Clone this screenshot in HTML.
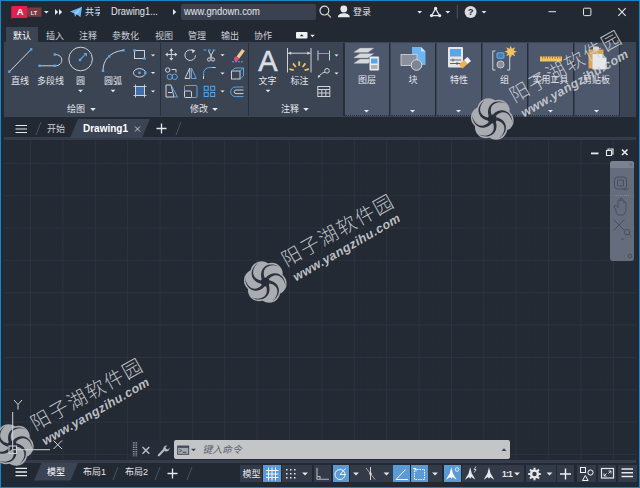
<!DOCTYPE html>
<html><head><meta charset="utf-8"><title>AutoCAD LT</title>
<style>
*{box-sizing:border-box;margin:0;padding:0}
html,body{width:640px;height:488px;overflow:hidden;background:#222933}
body{font-family:"Liberation Sans","Noto Sans CJK SC",sans-serif;color:#e6e8ec;font-size:10px;position:relative}
.a{position:absolute}
.t{position:absolute;font-size:9px;line-height:12px;color:#e4e6ea;white-space:nowrap}
.c{transform:translateX(-50%)}
#frame{position:absolute;left:0;top:0;width:640px;height:488px;border:1px solid #1787c5}
#ribbon{position:absolute;left:4px;top:42px;width:632px;height:75px;background:#3b4453}
.hp{position:absolute;top:43px;width:44px;height:72.500px;background:#4d586d;border-bottom:1px dotted #2b313d}
#draw{position:absolute;left:4px;top:137px;width:632px;height:324px;background:#232a34}
#status{position:absolute;left:1px;top:461px;width:638px;height:26px;background:#222933}
svg{position:absolute;left:0;top:0;overflow:visible}
.wm{position:absolute;white-space:nowrap;transform-origin:0 50%;transform:rotate(-29.3deg);color:rgba(208,210,214,.9)}
.wm1{font-size:19.5px;line-height:22px;letter-spacing:1.5px;font-weight:300}
.wm2{font-size:12.5px;line-height:16px;font-weight:bold;font-style:italic;letter-spacing:.4px;transform:rotate(-30deg)}
</style></head><body>
<div id="frame"></div>
<div id="ribbon"></div>
<div class="a" style="left:6px;top:27px;width:32px;height:15px;background:#3b4453"></div>
<div class="hp" style="left:344.5px"></div>
<div class="hp" style="left:390.5px"></div>
<div class="hp" style="left:436.5px"></div>
<div class="hp" style="left:482.5px"></div>
<div class="hp" style="left:528.5px"></div>
<div class="hp" style="left:574.5px"></div>
<div class="a" style="left:342.8px;top:43px;width:1.700px;height:73px;background:#262c37"></div>
<div class="a" style="left:388.8px;top:43px;width:1.700px;height:73px;background:#262c37"></div>
<div class="a" style="left:434.8px;top:43px;width:1.700px;height:73px;background:#262c37"></div>
<div class="a" style="left:480.8px;top:43px;width:1.700px;height:73px;background:#262c37"></div>
<div class="a" style="left:526.8px;top:43px;width:1.700px;height:73px;background:#262c37"></div>
<div class="a" style="left:572.8px;top:43px;width:1.700px;height:73px;background:#262c37"></div>
<div class="a" style="left:618.8px;top:43px;width:1.700px;height:73px;background:#262c37"></div>
<div class="a" style="left:159.5px;top:43px;width:1px;height:73px;background:#2a303b"></div>
<div class="a" style="left:247.5px;top:43px;width:1px;height:73px;background:#2a303b"></div>
<div class="a" style="left:343.5px;top:43px;width:1px;height:73px;background:#2a303b"></div>
<div class="a" style="left:181px;top:4px;width:135px;height:16px;background:#3a4252;border-radius:2px"></div>
<div id="draw"></div>
<svg width="640" height="488" viewBox="0 0 640 488"><path d="M4.60 139V459 M11.07 139V459 M17.55 139V459 M24.02 139V459 M36.98 139V459 M43.45 139V459 M49.93 139V459 M56.40 139V459 M69.36 139V459 M75.83 139V459 M82.31 139V459 M88.78 139V459 M101.74 139V459 M108.21 139V459 M114.69 139V459 M121.16 139V459 M134.12 139V459 M140.59 139V459 M147.07 139V459 M153.54 139V459 M166.50 139V459 M172.97 139V459 M179.45 139V459 M185.92 139V459 M198.88 139V459 M205.35 139V459 M211.83 139V459 M218.30 139V459 M231.26 139V459 M237.73 139V459 M244.21 139V459 M250.68 139V459 M263.64 139V459 M270.11 139V459 M276.59 139V459 M283.06 139V459 M296.02 139V459 M302.49 139V459 M308.97 139V459 M315.44 139V459 M328.40 139V459 M334.87 139V459 M341.35 139V459 M347.82 139V459 M360.78 139V459 M367.25 139V459 M373.73 139V459 M380.20 139V459 M393.16 139V459 M399.63 139V459 M406.11 139V459 M412.58 139V459 M425.54 139V459 M432.01 139V459 M438.49 139V459 M444.96 139V459 M457.92 139V459 M464.39 139V459 M470.87 139V459 M477.34 139V459 M490.30 139V459 M496.77 139V459 M503.25 139V459 M509.72 139V459 M522.68 139V459 M529.15 139V459 M535.63 139V459 M542.10 139V459 M555.06 139V459 M561.53 139V459 M568.01 139V459 M574.48 139V459 M587.44 139V459 M593.91 139V459 M600.39 139V459 M606.86 139V459 M619.82 139V459 M626.29 139V459 M632.77 139V459 M4 143.88H636 M4 150.36H636 M4 156.83H636 M4 169.77H636 M4 176.24H636 M4 182.72H636 M4 189.19H636 M4 202.13H636 M4 208.60H636 M4 215.08H636 M4 221.55H636 M4 234.49H636 M4 240.96H636 M4 247.44H636 M4 253.91H636 M4 266.85H636 M4 273.32H636 M4 279.80H636 M4 286.27H636 M4 299.21H636 M4 305.68H636 M4 312.16H636 M4 318.63H636 M4 331.57H636 M4 338.04H636 M4 344.52H636 M4 350.99H636 M4 363.93H636 M4 370.40H636 M4 376.88H636 M4 383.35H636 M4 396.29H636 M4 402.76H636 M4 409.24H636 M4 415.71H636 M4 428.65H636 M4 435.12H636 M4 441.60H636 M4 448.07H636" stroke="#262d38" stroke-width="1" fill="none" stroke-dasharray="1 2"/><path d="M30.50 139V459 M62.88 139V459 M95.26 139V459 M127.64 139V459 M160.02 139V459 M192.40 139V459 M224.78 139V459 M257.16 139V459 M289.54 139V459 M321.92 139V459 M354.30 139V459 M386.68 139V459 M419.06 139V459 M451.44 139V459 M483.82 139V459 M516.20 139V459 M548.58 139V459 M580.96 139V459 M613.34 139V459 M4 163.30H636 M4 195.66H636 M4 228.02H636 M4 260.38H636 M4 292.74H636 M4 325.10H636 M4 357.46H636 M4 389.82H636 M4 422.18H636 M4 454.54H636" stroke="#2d3440" stroke-width="1" fill="none"/></svg>
<div class="a" style="left:4px;top:137.300px;width:632px;height:3.200px;background:#343c4b"></div>
<div id="status"></div>
<div class="a" style="left:4px;top:459.500px;width:632px;height:3.500px;background:#353d4c"></div>
<div class="a" style="left:240px;top:465px;width:22px;height:17px;background:#333b49"></div>
<div class="a" style="left:263px;top:465px;width:17.5px;height:17px;background:#5b9bd5"></div>
<div class="a" style="left:282px;top:465px;width:30px;height:17px;background:#333b49"></div>
<div class="a" style="left:314px;top:465px;width:17px;height:17px;background:#333b49"></div>
<div class="a" style="left:332.5px;top:465px;width:16.5px;height:17px;background:#5b9bd5"></div>
<div class="a" style="left:350px;top:465px;width:12px;height:17px;background:#333b49"></div>
<div class="a" style="left:362px;top:465px;width:31px;height:17px;background:#333b49"></div>
<div class="a" style="left:393px;top:465px;width:17px;height:17px;background:#5b9bd5"></div>
<div class="a" style="left:411px;top:465px;width:17px;height:17px;background:#5b9bd5"></div>
<div class="a" style="left:428px;top:465px;width:14px;height:17px;background:#333b49"></div>
<div class="a" style="left:444px;top:465px;width:17px;height:17px;background:#5b9bd5"></div>
<div class="a" style="left:462px;top:465px;width:36px;height:17px;background:#333b49"></div>
<div class="a" style="left:498px;top:465px;width:26px;height:17px;background:#333b49"></div>
<div class="a" style="left:526px;top:465px;width:30px;height:17px;background:#333b49"></div>
<div class="a" style="left:557px;top:465px;width:17px;height:17px;background:#333b49"></div>
<div class="a" style="left:577px;top:465px;width:19px;height:17px;background:#333b49"></div>
<div class="a" style="left:598px;top:465px;width:18px;height:17px;background:#333b49"></div>
<div class="a" style="left:618px;top:465px;width:19px;height:17px;background:#333b49"></div>
<div class="a" style="left:174px;top:440px;width:336px;height:19px;background:#c4c5c7;border-radius:2px"></div>
<div class="a" style="left:130px;top:440px;width:44px;height:19px;background:#262d38"></div>
<div class="a" style="left:610px;top:161px;width:24px;height:100px;background:#6b7382;border-radius:3px;opacity:.92"></div>
<svg width="640" height="488" viewBox="0 0 640 488"><path d="M11.300 7L12.500 6H27V18H12.500L11.300 19z" fill="#e61e50"/><rect x="27" y="7.500" width="14.500" height="9.300" fill="#7a3a44"/><text x="20.200" y="15.200" text-anchor="middle" font-family="Liberation Sans,sans-serif" font-size="9.500" font-weight="bold" fill="#fff">A</text><text x="30.800" y="14.700" font-family="Liberation Sans,sans-serif" font-size="5.500" font-weight="bold" fill="#efe3e3">LT</text><path d="M43.9 11.0h4.8l-2.4 2.4z" fill="#e6e8ec"/><path d="M55 9l3.2 3-3.2 3zM59 9l3.2 3-3.2 3z" fill="#e6e8ec"/><path d="M70 11.5L82 6.8 80.5 17.2 76.8 14.3 75 17 74.3 13.4z" fill="#6db6f2"/><path d="M74.3 13.4L82 6.8 76.8 14.3" fill="#9fd0f8"/><path d="M173 9l3.2 3-3.2 3z" fill="#e6e8ec"/><circle cx="324.4" cy="10.6" r="4.4" fill="none" stroke="#d8dbe0" stroke-width="1.2"/><path d="M327.6 14l3.2 3.4" stroke="#e0b080" stroke-width="1.4"/><circle cx="343.8" cy="9" r="3.4" fill="#e6e8ec"/><path d="M337.8 17.2c.3-3 2.5-4 6-4s5.7 1 6 4z" fill="#e6e8ec"/><path d="M417.3 11.0h4.8l-2.4 2.4z" fill="#e6e8ec"/><path d="M435.6 8.6L431.6 15.6H439.6z" fill="none" stroke="#e6e8ec" stroke-width="1.2"/><circle cx="435.6" cy="8.4" r="1.6" fill="#e6e8ec"/><circle cx="431.5" cy="15.6" r="1.6" fill="#e6e8ec"/><circle cx="439.7" cy="15.6" r="1.6" fill="#e6e8ec"/><path d="M445.40000000000003 11.0h4.8l-2.4 2.4z" fill="#e6e8ec"/><path d="M457.3 5V18.5" stroke="#4a5469" stroke-width="1"/><circle cx="470.6" cy="12" r="6" fill="#dcdde0"/><text x="470.6" y="15.4" text-anchor="middle" font-family="Liberation Sans,sans-serif" font-size="9.5" font-weight="bold" fill="#222933">?</text><path d="M481.6 11.0h4.8l-2.4 2.4z" fill="#e6e8ec"/><path d="M548.5 11.7h7.5" stroke="#e6e8ec" stroke-width="1"/><rect x="583.5" y="8.2" width="7.4" height="7.4" rx="1" fill="none" stroke="#e6e8ec" stroke-width="1"/><path d="M618.3 8.2l7.4 7.6M625.7 8.2l-7.4 7.6" stroke="#e6e8ec" stroke-width="1.1"/><rect x="296" y="32" width="11.500" height="6.500" rx="1" fill="#f0f1f3"/><path d="M299.700 36.200h4l-2-2z" fill="#222933"/><path d="M310.2 34.85h4.6l-2.3 2.3z" fill="#e6e8ec"/><path d="M9.5 71.5L31 49.5" stroke="#cfd2d8" stroke-width="1" fill="none"/><rect x="8.100000000000001" y="70.5" width="2.4" height="2.4" fill="#58a6e8"/><rect x="30.0" y="48.099999999999994" width="2.4" height="2.4" fill="#58a6e8"/><path d="M39.5 65.8h16c3.5 0 6.3-2.4 6.3-5.7s-2.6-5.6-7-5.6" stroke="#cfd2d8" stroke-width="1" fill="none"/><rect x="38.3" y="64.6" width="2.4" height="2.4" fill="#58a6e8"/><rect x="53.5" y="64.6" width="2.4" height="2.4" fill="#58a6e8"/><rect x="53.5" y="53.3" width="2.4" height="2.4" fill="#58a6e8"/><circle cx="80.6" cy="59" r="11.8" stroke="#cfd2d8" stroke-width="1" fill="none"/><path d="M80.3 59.5L86 53.8" stroke="#58a6e8" stroke-width="1.1"/><rect x="78.8" y="58.8" width="2.4" height="2.4" fill="#58a6e8"/><path d="M83.8 53.6h2.6v2.6" stroke="#58a6e8" stroke-width="1.1" fill="none"/><path d="M103 70.8c0-10 6-19 20.5-20.5" stroke="#cfd2d8" stroke-width="1" fill="none"/><rect x="101.8" y="69.6" width="2.4" height="2.4" fill="#58a6e8"/><rect x="108.1" y="55.099999999999994" width="2.4" height="2.4" fill="#58a6e8"/><rect x="122.3" y="49.099999999999994" width="2.4" height="2.4" fill="#58a6e8"/><path d="M78.1 89.8h4.8l-2.4 2.4z" fill="#e6e8ec"/><path d="M110.6 89.8h4.8l-2.4 2.4z" fill="#e6e8ec"/><rect x="134.5" y="50.5" width="10" height="8" stroke="#cfd2d8" stroke-width="1" fill="none"/><rect x="133.3" y="49.3" width="2.4" height="2.4" fill="#58a6e8"/><rect x="143.3" y="57.3" width="2.4" height="2.4" fill="#58a6e8"/><path d="M150.9 54.45h4.2l-2.1 2.1z" fill="#e6e8ec"/><ellipse cx="139.5" cy="72.8" rx="6" ry="4.2" stroke="#cfd2d8" stroke-width="1" fill="none"/><rect x="138.3" y="71.6" width="2.4" height="2.4" fill="#58a6e8"/><rect x="144.10000000000002" y="71.6" width="2.4" height="2.4" fill="#58a6e8"/><path d="M150.9 71.95h4.2l-2.1 2.1z" fill="#e6e8ec"/><rect x="135.5" y="86.5" width="9" height="9" fill="#3f6fa8" stroke="#cfd2d8" stroke-width=".9"/><path d="M133.5 86.5h13M133.5 95.5h13M135.5 84.5v13M144.5 84.5v13" stroke="#cfd2d8" stroke-width=".9"/><path d="M150.9 90.45h4.2l-2.1 2.1z" fill="#e6e8ec"/><path d="M90.2 108.1h5.6l-2.8 2.8z" fill="#e6e8ec"/><path d="M171.300 50v9M166.800 54.500h9" stroke="#cfd2d8" stroke-width="1" fill="none"/><path d="M171.300 48.300l2 2.700h-4zM171.300 60.700l2-2.700h-4zM165.100 54.500l2.700-2v4zM177.500 54.500l-2.700-2v4z" fill="#cfd2d8"/><path d="M193.800 51.300a5.300 5.300 0 1 0 1.700 4" stroke="#cfd2d8" stroke-width="1" fill="none"/><path d="M191.300 49l4 1.600-2.600 3z" fill="#cfd2d8"/><path d="M203.500 50h12" stroke="#58a6e8" stroke-width="1.100" stroke-dasharray="3 1.500"/><path d="M208.500 50.500l3.500 7.500M213.500 50.500l-3.500 7.500" stroke="#cfd2d8" stroke-width="1" fill="none"/><circle cx="209" cy="59.500" r="1.600" stroke="#cfd2d8" stroke-width="1" fill="none"/><circle cx="213" cy="59.500" r="1.600" stroke="#cfd2d8" stroke-width="1" fill="none"/><path d="M220.4 54.25h4.2l-2.1 2.1z" fill="#e6e8ec"/><path d="M236.500 56.500l5.500-7.500 2.800 2-5.500 7.500z" fill="#f0c890"/><path d="M234 57.500l2.500-1 2.800 2-1.800 2.500-3 .300z" fill="#e84a7a"/><path d="M232 61.800h12" stroke="#58a6e8" stroke-width="1" stroke-dasharray="2 1"/><circle cx="167.700" cy="70" r="2.200" stroke="#cfd2d8" stroke-width="1" fill="none"/><circle cx="169.800" cy="76.800" r="2.700" stroke="#58a6e8" stroke-width="1" fill="none"/><circle cx="174.600" cy="76.800" r="2.700" stroke="#58a6e8" stroke-width="1" fill="none"/><path d="M171.500 69.500h4.500v3" stroke="#cfd2d8" stroke-width="1" fill="none"/><path d="M189.800 68v10.500h-4.800z" stroke="#cfd2d8" stroke-width="1" fill="none"/><path d="M191.500 68v10.500h4.800z" stroke="#58a6e8" stroke-width="1" fill="none"/><path d="M203.500 79v-5.500a6 6 0 0 1 6-6h6" stroke="#58a6e8" stroke-width="1" fill="none"/><path d="M203.500 79v-3M212.500 67.500h3" stroke="#cfd2d8" stroke-width="1" fill="none"/><path d="M220.4 72.45h4.2l-2.1 2.1z" fill="#e6e8ec"/><rect x="231.500" y="71" width="8.500" height="8" stroke="#cfd2d8" stroke-width="1" fill="none"/><path d="M231.500 71l3.500-3h8.500l-3.500 3M243.500 68v8l-3.500 3" stroke="#58a6e8" stroke-width="1" fill="none"/><path d="M166 85h5l3 12h-8z" stroke="#cfd2d8" stroke-width="1" fill="none"/><path d="M171 85l6.500 12h-3.500" stroke="#58a6e8" stroke-width="1" fill="none"/><path d="M168 92.500h4" stroke="#cfd2d8" stroke-width="1" fill="none"/><rect x="184.500" y="85.500" width="12.500" height="12" rx="1" stroke="#58a6e8" stroke-width="1" fill="none"/><rect x="184.500" y="91" width="7" height="6.500" rx="1" stroke="#cfd2d8" stroke-width="1" fill="none"/><rect x="204.2" y="86.3" width="4" height="4" stroke="#58a6e8" stroke-width="1" fill="none"/><rect x="210.7" y="86.3" width="4" height="4" stroke="#58a6e8" stroke-width="1" fill="none"/><rect x="204.2" y="92.5" width="4" height="4" stroke="#58a6e8" stroke-width="1" fill="none"/><rect x="210.7" y="92.5" width="4" height="4" stroke="#58a6e8" stroke-width="1" fill="none"/><path d="M220.4 90.45h4.2l-2.1 2.1z" fill="#e6e8ec"/><path d="M243.500 87h-8a4.800 4.800 0 0 0 0 9.600h8" stroke="#58a6e8" stroke-width="1" fill="none"/><path d="M243.500 90h-7.500a1.800 1.800 0 0 0 0 3.600h7.500" stroke="#cfd2d8" stroke-width="1" fill="none"/><path d="M212.2 108.1h5.6l-2.8 2.8z" fill="#e6e8ec"/><text x="268" y="71" text-anchor="middle" font-family="Liberation Sans,sans-serif" font-size="29" fill="#dcdee2" stroke="#dcdee2" stroke-width=".5">A</text><path d="M265.6 89.8h4.8l-2.4 2.4z" fill="#e6e8ec"/><path d="M287.500 48v24.500M311 48v24.500M288 53.200h22.500" stroke="#cfd2d8" stroke-width="1" fill="none"/><path d="M288 53.200l3.200-1.600v3.200zM310.500 53.200l-3.200-1.600v3.200z" fill="#cfd2d8"/><path d="M293.8 70.2L289.4 69.2" stroke="#f0c060" stroke-width="1.800"/><path d="M295.8 67.0L293.0 63.4" stroke="#f0c060" stroke-width="1.800"/><path d="M299.2 65.8L299.2 61.3" stroke="#f0c060" stroke-width="1.800"/><path d="M302.6 67.0L305.4 63.4" stroke="#f0c060" stroke-width="1.800"/><path d="M304.6 70.2L309.0 69.2" stroke="#f0c060" stroke-width="1.800"/><path d="M318 50.500v10M329.500 50.500v10" stroke="#cfd2d8" stroke-width="1" fill="none"/><path d="M318 53.500h11.500" stroke="#58a6e8" stroke-width="1.100"/><path d="M334.4 54.45h4.2l-2.1 2.1z" fill="#e6e8ec"/><circle cx="327" cy="70.800" r="2.300" stroke="#cfd2d8" stroke-width="1" fill="none"/><path d="M325 72.200c-3 .5-5 2.500-6.500 5" stroke="#cfd2d8" stroke-width="1" fill="none"/><path d="M317.800 78l.5-3.200 2.300 1.800z" fill="#cfd2d8"/><path d="M334.4 72.45h4.2l-2.1 2.1z" fill="#e6e8ec"/><rect x="317.800" y="86.500" width="12" height="10" stroke="#cfd2d8" stroke-width="1" fill="none"/><path d="M317.800 89.500h12M317.800 93h12M321.800 89.500v7M325.800 89.500v7" stroke="#cfd2d8" stroke-width="1" fill="none"/><path d="M303.2 108.1h5.6l-2.8 2.8z" fill="#e6e8ec"/><path d="M354 52.0l6-4h14l-6 4.500h-14z" fill="#d6d8dc" stroke="#8a909c" stroke-width=".4"/><path d="M354 57.5l6-4h14l-6 4.500h-14z" fill="#d6d8dc" stroke="#8a909c" stroke-width=".4"/><path d="M354 63.0l6-4h14l-6 4.500h-14z" fill="#d6d8dc" stroke="#8a909c" stroke-width=".4"/><rect x="369.500" y="56.500" width="9.500" height="14" rx="1" fill="#eceded" stroke="#9aa0aa" stroke-width=".5"/><rect x="371" y="58.500" width="6.500" height="5" fill="#58a6e8"/><path d="M371 66h6.500M371 68h6.500" stroke="#555" stroke-width=".8"/><path d="M412 47h9l4.500 4.500v13.500h-13.500z" fill="#6db6f2"/><path d="M421 47v4.500h4.500z" fill="#bfe0fa"/><rect x="401" y="54.500" width="16" height="11" fill="#8a909c" stroke="#d6d8dc" stroke-width=".8"/><circle cx="416.500" cy="65" r="5.300" fill="#7d8492" stroke="#d6d8dc" stroke-width="1"/><rect x="448" y="47" width="15" height="20.500" rx="1" fill="#e4e5e7"/><rect x="450" y="49" width="11" height="7.500" fill="#58a6e8"/><path d="M450 60h11M450 63.500h11M453 58.500v3M457 62v3" stroke="#555" stroke-width=".9"/><path d="M459 64.500l5-4.500 3.500 4-5 4.500z" fill="#f0b050"/><path d="M464 60l3.500-3 3.500 4-3.500 3z" fill="#f2f3f5"/><path d="M495.500 51h-2.700v19h2.700M507 51h2.700v19h-2.700" stroke="#cfd2d8" stroke-width="1" fill="none"/><rect x="497" y="52.800" width="7" height="5.500" rx="1" fill="#3f7fc0" stroke="#7dbcf2" stroke-width=".8"/><circle cx="500.500" cy="64.500" r="3.600" fill="#8a909c" stroke="#dfe2e7" stroke-width=".7"/><path transform="translate(0.200 -0.500)" d="M510.500 46l1.200 3.300 3.300-1.500-1.500 3.300 3.300 1.200-3.300 1.200 1.500 3.300-3.300-1.500-1.200 3.300-1.200-3.300-3.300 1.500 1.500-3.300-3.300-1.200 3.300-1.200-1.500-3.300 3.300 1.500z" fill="#f2c260"/><rect x="540" y="56.500" width="22" height="5" fill="#f2c260"/><path d="M542.500 56.500v2M545 56.500v2M547.500 56.500v2M550 56.500v2M552.500 56.500v2M555 56.500v2M557.500 56.500v2M560 56.500v2" stroke="#7a5a20" stroke-width=".7"/><rect x="588.500" y="49.500" width="15" height="19" fill="#dca45c"/><rect x="593" y="46.500" width="6" height="4" rx="1" fill="#d6d8dc"/><path d="M592.500 54h10l4 4v11.500h-14z" fill="#e6e7e9"/><path d="M602.500 54v4h4z" fill="#aeb2ba"/><path d="M364.0 109.95h5.0l-2.5 2.5z" fill="#e6e8ec"/><path d="M410.0 109.95h5.0l-2.5 2.5z" fill="#e6e8ec"/><path d="M456.0 109.95h5.0l-2.5 2.5z" fill="#e6e8ec"/><path d="M502.0 109.95h5.0l-2.5 2.5z" fill="#e6e8ec"/><path d="M548.0 109.95h5.0l-2.5 2.5z" fill="#e6e8ec"/><path d="M594.0 109.95h5.0l-2.5 2.5z" fill="#e6e8ec"/><path d="M15.500 125.500h11.500M15.500 129h11.500M15.500 132.500h11.500" stroke="#e6e8ec" stroke-width="1.200"/><path d="M36 135l5-13M176 135l5-13" stroke="#4a5263" stroke-width="1"/><path d="M70 138l8-19h72l-8 19z" fill="#3b4453"/><path d="M135 126.500l5 5M140 126.500l-5 5" stroke="#c8ccd4" stroke-width="1"/><path d="M156.500 128.500h10M161.500 123.500v10" stroke="#e6e8ec" stroke-width="1.300"/><path d="M591 153.400h7.500" stroke="#e6e8ec" stroke-width="1.800"/><path d="M606.500 150.500h5v5h-5zM608 150.500v-1.500h5v5h-1.500" stroke="#e6e8ec" stroke-width="1.100" fill="none"/><path d="M622 149.500l5.500 5.500M627.500 149.500l-5.500 5.500" stroke="#e6e8ec" stroke-width="1.600"/><path d="M610 168v-4a3 3 0 0 1 3-3h18a3 3 0 0 1 3 3v4z" fill="#7a8291"/><path d="M629.500 163l3 3M632.500 163l-3 3" stroke="#5a6272" stroke-width=".8"/><g transform="translate(0 -2.500)"><rect x="614.500" y="179.500" width="12" height="12" rx="3" stroke="#485060" stroke-width="1" fill="none"/><rect x="617.500" y="182.500" width="6" height="6" rx="1" stroke="#485060" stroke-width="1" fill="none"/><path d="M623 191.500c2 1.500 5 1 5.500-1" stroke="#485060" stroke-width="1" fill="none"/></g><path d="M614 195.500h16" stroke="#7d8594" stroke-dasharray="1 1"/><path d="M616 210c-2-3-2.500-4-1-4.500s2.500 1.500 3 2v-6.500c0-1.500 2-1.500 2 0v-2c0-1.500 2-1.500 2 0v2c0-1.500 2-1.500 2 0v2c0-1.500 2-1.500 2 0v6c0 3-1.500 5-3 6h-5c-1-1-1.500-2-2-3z" stroke="#485060" stroke-width="1" fill="none"/><path d="M613.500 219.500l11 11M624.500 219.500l-11 11" stroke="#485060" stroke-width="1" fill="none"/><circle cx="627" cy="232" r="2.800" stroke="#485060" stroke-width="1" fill="none"/><path d="M629 234l2.500 2.500" stroke="#485060" stroke-width="1" fill="none"/><path d="M620.500 238.500h4l-2 2z" fill="#4e5666"/><circle cx="630" cy="256" r="1.800" stroke="#485060" stroke-width="1" fill="none"/><path d="M133.400 442.300v14M135 442.300v14M136.600 442.300v14" stroke="#9aa0aa" stroke-width="1.100" stroke-dasharray="1.200 1"/><path d="M142.500 447l6.800 6.800M149.300 447l-6.800 6.800" stroke="#bcc0c8" stroke-width="1.400"/><path d="M158.800 455.300l6.200-6.500" stroke="#b4b8c0" stroke-width="2.200" stroke-linecap="round"/><path d="M164 450.500a3.200 3.200 0 0 1 3.300-5l-1.800 2 .8 1.600 1.800.300 1.400-1.800a3.200 3.200 0 0 1-4.300 3.600z" fill="#b4b8c0"/><rect x="177.700" y="446" width="11" height="8.300" fill="#a4a8b0" stroke="#3a4252" stroke-width=".9"/><path d="M177.700 447h11" stroke="#3a4252" stroke-width="1.600"/><path d="M179.500 449.300l2 1.300-2 1.300M182.800 452.300h3.500" stroke="#2a313c" stroke-width=".8" fill="none"/><path d="M191.0 448.75h5.0l-2.5 2.5z" fill="#3a4252"/><path d="M501.500 451h5l-2.500-2.800z" fill="#3a4252"/><path d="M15.500 468.300h11.500M15.500 472h11.500M15.500 475.700h11.500" stroke="#e6e8ec" stroke-width="1.300"/><path d="M34 480.500l7.500-17.500h36.500l-7.500 17.500z" fill="#3b4453"/><path d="M113 480l5-13M155 480l5-13M187 480l5-13" stroke="#4a5263" stroke-width="1"/><path d="M167.500 473.500h10M172.500 468.500v10" stroke="#e6e8ec" stroke-width="1.300"/><path d="M266 470.500h12.500M266 474h12.500M266 477.500h12.500M268.500 467.500v13M272 467.500v13M275.500 467.500v13" stroke="#f2f3f5" stroke-width="1" fill="none"/><rect x="286" y="469" width="1.500" height="1.500" fill="#e6e8ec"/><rect x="286" y="473" width="1.500" height="1.500" fill="#e6e8ec"/><rect x="286" y="477" width="1.500" height="1.500" fill="#e6e8ec"/><rect x="290" y="469" width="1.500" height="1.500" fill="#e6e8ec"/><rect x="290" y="473" width="1.500" height="1.500" fill="#e6e8ec"/><rect x="290" y="477" width="1.500" height="1.500" fill="#e6e8ec"/><rect x="294" y="469" width="1.500" height="1.500" fill="#e6e8ec"/><rect x="294" y="473" width="1.500" height="1.500" fill="#e6e8ec"/><rect x="294" y="477" width="1.500" height="1.500" fill="#e6e8ec"/><path d="M302.1 472.55h5.8l-2.9 2.9z" fill="#e6e8ec"/><path d="M317 467.800v11.500h12M317 476.500h3v2.800" stroke="#b4b8c0" stroke-width="1.100" fill="none"/><circle cx="340" cy="474.500" r="5" stroke="#f2f3f5" stroke-width="1" fill="none"/><path d="M340 474.500l5.500-6M340 474.500h6" stroke="#f2f3f5" stroke-width="1" fill="none"/><path d="M353.1 472.55h5.8l-2.9 2.9z" fill="#e6e8ec"/><path d="M366 468l9 11.500" stroke="#d8a070" stroke-width="1"/><path d="M370.500 467v13" stroke="#d0d3d9" stroke-width="1"/><circle cx="370.500" cy="473.700" r="1.300" fill="#d0d3d9"/><path d="M383.6 472.55h5.8l-2.9 2.9z" fill="#e6e8ec"/><path d="M396 479.500h12M396 479.500l9.500-10" stroke="#f2f3f5" stroke-width="1" fill="none"/><rect x="414.500" y="469.500" width="10" height="10" stroke="#f2f3f5" stroke-width="1" fill="none" stroke-dasharray="1.500 1"/><path d="M413 468.500h3v3" stroke="#f2f3f5" stroke-width="1" fill="none"/><path d="M432.1 472.55h5.8l-2.9 2.9z" fill="#e6e8ec"/><path d="M451.3 467.300l1.600 6.200c1.200 2 2.600 4 3.600 6.200l-4-2.700-1.200 1.800-1.200-1.800-4 2.700c1-2.200 2.400-4.200 3.600-6.200z" fill="#ffffff"/><circle cx="457" cy="469.500" r="1.800" stroke="#fff" stroke-width=".8" fill="none"/><path d="M470.2 467.300l1.600 6.200c1.200 2 2.600 4 3.600 6.200l-4-2.700-1.200 1.800-1.200-1.800-4 2.700c1-2.200 2.400-4.200 3.600-6.200z" fill="#e6e8ec"/><path d="M476 466.500l-1.800 3h1.800l-1.800 3" stroke="#e6e8ec" stroke-width=".8" fill="none"/><path d="M489 467.300l1.600 6.200c1.200 2 2.600 4 3.600 6.200l-4-2.700-1.200 1.800-1.200-1.800-4 2.700c1-2.200 2.400-4.200 3.600-6.200z" fill="#e6e8ec"/><path d="M514.1 472.55h5.8l-2.9 2.9z" fill="#e6e8ec"/><circle cx="534.500" cy="474" r="3.400" stroke="#e6e8ec" stroke-width="2.400" fill="none"/><path d="M538.5 474.0L540.8 474.0" stroke="#e6e8ec" stroke-width="2"/><path d="M537.3 476.8L539.0 478.5" stroke="#e6e8ec" stroke-width="2"/><path d="M534.5 478.0L534.5 480.3" stroke="#e6e8ec" stroke-width="2"/><path d="M531.7 476.8L530.0 478.5" stroke="#e6e8ec" stroke-width="2"/><path d="M530.5 474.0L528.2 474.0" stroke="#e6e8ec" stroke-width="2"/><path d="M531.7 471.2L530.0 469.5" stroke="#e6e8ec" stroke-width="2"/><path d="M534.5 470.0L534.5 467.7" stroke="#e6e8ec" stroke-width="2"/><path d="M537.3 471.2L539.0 469.5" stroke="#e6e8ec" stroke-width="2"/><path d="M546.6 472.55h5.8l-2.9 2.9z" fill="#e6e8ec"/><path d="M560 474h11M565.500 468.500v11" stroke="#f2f3f5" stroke-width="1.400"/><rect x="580.500" y="467.500" width="5" height="5" stroke="#f2f3f5" stroke-width="1" fill="none"/><circle cx="590.500" cy="472.500" r="2.600" stroke="#f2f3f5" stroke-width="1" fill="none"/><path d="M582.500 480.500l2.800-5 2.800 5z" stroke="#f2f3f5" stroke-width="1" fill="none"/><rect x="601.500" y="468.500" width="12" height="9.500" stroke="#e6e8ec" stroke-width="1.200" fill="none"/><path d="M604 476l2.500-2.500M611 471l-2.500 2.500M604 473.500v2.500h2.500M608.500 471h2.500v2.500" stroke="#e6e8ec" stroke-width=".9" fill="none"/><path d="M621.500 469h11.500M621.500 472.800h11.500M621.500 476.500h11.500" stroke="#e6e8ec" stroke-width="1.500"/><g transform="translate(492.3 119)"><circle cx="10.40" cy="1.46" r="10.92" fill="#a9acb1"/><circle cx="3.93" cy="9.74" r="10.92" fill="#a9acb1"/><circle cx="-6.46" cy="8.27" r="10.92" fill="#a9acb1"/><circle cx="-10.40" cy="-1.46" r="10.92" fill="#a9acb1"/><circle cx="-3.93" cy="-9.74" r="10.92" fill="#a9acb1"/><circle cx="6.46" cy="-8.27" r="10.92" fill="#a9acb1"/><path transform="rotate(8)" d="M0 -4.62C6.93 -13.86 18.06 -11.34 20.79 1.26C17.22 -9.03 8.40 -11.55 3.09 -3.43z" fill="#2a313c"/><path transform="rotate(68)" d="M0 -4.62C6.93 -13.86 18.06 -11.34 20.79 1.26C17.22 -9.03 8.40 -11.55 3.09 -3.43z" fill="#2a313c"/><path transform="rotate(128)" d="M0 -4.62C6.93 -13.86 18.06 -11.34 20.79 1.26C17.22 -9.03 8.40 -11.55 3.09 -3.43z" fill="#2a313c"/><path transform="rotate(188)" d="M0 -4.62C6.93 -13.86 18.06 -11.34 20.79 1.26C17.22 -9.03 8.40 -11.55 3.09 -3.43z" fill="#2a313c"/><path transform="rotate(248)" d="M0 -4.62C6.93 -13.86 18.06 -11.34 20.79 1.26C17.22 -9.03 8.40 -11.55 3.09 -3.43z" fill="#2a313c"/><path transform="rotate(308)" d="M0 -4.62C6.93 -13.86 18.06 -11.34 20.79 1.26C17.22 -9.03 8.40 -11.55 3.09 -3.43z" fill="#2a313c"/><circle r="4.62" fill="#262d38"/></g><g transform="translate(265.3 282)"><circle cx="10.40" cy="1.46" r="10.92" fill="#a9acb1"/><circle cx="3.93" cy="9.74" r="10.92" fill="#a9acb1"/><circle cx="-6.46" cy="8.27" r="10.92" fill="#a9acb1"/><circle cx="-10.40" cy="-1.46" r="10.92" fill="#a9acb1"/><circle cx="-3.93" cy="-9.74" r="10.92" fill="#a9acb1"/><circle cx="6.46" cy="-8.27" r="10.92" fill="#a9acb1"/><path transform="rotate(8)" d="M0 -4.62C6.93 -13.86 18.06 -11.34 20.79 1.26C17.22 -9.03 8.40 -11.55 3.09 -3.43z" fill="#2a313c"/><path transform="rotate(68)" d="M0 -4.62C6.93 -13.86 18.06 -11.34 20.79 1.26C17.22 -9.03 8.40 -11.55 3.09 -3.43z" fill="#2a313c"/><path transform="rotate(128)" d="M0 -4.62C6.93 -13.86 18.06 -11.34 20.79 1.26C17.22 -9.03 8.40 -11.55 3.09 -3.43z" fill="#2a313c"/><path transform="rotate(188)" d="M0 -4.62C6.93 -13.86 18.06 -11.34 20.79 1.26C17.22 -9.03 8.40 -11.55 3.09 -3.43z" fill="#2a313c"/><path transform="rotate(248)" d="M0 -4.62C6.93 -13.86 18.06 -11.34 20.79 1.26C17.22 -9.03 8.40 -11.55 3.09 -3.43z" fill="#2a313c"/><path transform="rotate(308)" d="M0 -4.62C6.93 -13.86 18.06 -11.34 20.79 1.26C17.22 -9.03 8.40 -11.55 3.09 -3.43z" fill="#2a313c"/><circle r="4.62" fill="#262d38"/></g><g transform="translate(12.3 445)"><circle cx="10.40" cy="1.46" r="10.92" fill="#a9acb1"/><circle cx="3.93" cy="9.74" r="10.92" fill="#a9acb1"/><circle cx="-6.46" cy="8.27" r="10.92" fill="#a9acb1"/><circle cx="-10.40" cy="-1.46" r="10.92" fill="#a9acb1"/><circle cx="-3.93" cy="-9.74" r="10.92" fill="#a9acb1"/><circle cx="6.46" cy="-8.27" r="10.92" fill="#a9acb1"/><path transform="rotate(8)" d="M0 -4.62C6.93 -13.86 18.06 -11.34 20.79 1.26C17.22 -9.03 8.40 -11.55 3.09 -3.43z" fill="#2a313c"/><path transform="rotate(68)" d="M0 -4.62C6.93 -13.86 18.06 -11.34 20.79 1.26C17.22 -9.03 8.40 -11.55 3.09 -3.43z" fill="#2a313c"/><path transform="rotate(128)" d="M0 -4.62C6.93 -13.86 18.06 -11.34 20.79 1.26C17.22 -9.03 8.40 -11.55 3.09 -3.43z" fill="#2a313c"/><path transform="rotate(188)" d="M0 -4.62C6.93 -13.86 18.06 -11.34 20.79 1.26C17.22 -9.03 8.40 -11.55 3.09 -3.43z" fill="#2a313c"/><path transform="rotate(248)" d="M0 -4.62C6.93 -13.86 18.06 -11.34 20.79 1.26C17.22 -9.03 8.40 -11.55 3.09 -3.43z" fill="#2a313c"/><path transform="rotate(308)" d="M0 -4.62C6.93 -13.86 18.06 -11.34 20.79 1.26C17.22 -9.03 8.40 -11.55 3.09 -3.43z" fill="#2a313c"/><circle r="4.62" fill="#262d38"/></g><path d="M12.700 449.700V412M12.700 449.700H50" stroke="#d0d3d9" stroke-width="1" fill="none"/><rect x="9" y="446" width="7.500" height="7.500" stroke="#d0d3d9" stroke-width="1" fill="none"/><path d="M14 400l4 4.500 4-4.500M18 404.500v5" stroke="#d0d3d9" stroke-width="1" fill="none"/><path d="M53.500 440.500l8.500 8.500M62 440.500l-8.500 8.500" stroke="#d0d3d9" stroke-width="1" fill="none"/></svg>
<div class="t" style="left:85px;top:6px;width:15px;overflow:hidden;color:#cfe2f5">共享</div>
<div class="t" style="left:111px;top:6px;font-size:10.200px;transform-origin:0 50%;transform:scaleX(.91)">Drawing1...</div>
<div class="t" style="left:183.5px;top:6px;font-size:10.200px;transform-origin:0 50%;transform:scaleX(.925)">www.gndown.com</div>
<div class="t" style="left:353px;top:6px;">登录</div>
<div class="t" style="left:13px;top:29.5px;color:#fff">默认</div>
<div class="t" style="left:46px;top:29.5px;color:#cdd0d7">插入</div>
<div class="t" style="left:79px;top:29.5px;color:#cdd0d7">注释</div>
<div class="t" style="left:112px;top:29.5px;color:#cdd0d7">参数化</div>
<div class="t" style="left:155px;top:29.5px;color:#cdd0d7">视图</div>
<div class="t" style="left:188px;top:29.5px;color:#cdd0d7">管理</div>
<div class="t" style="left:221px;top:29.5px;color:#cdd0d7">输出</div>
<div class="t" style="left:254px;top:29.5px;color:#cdd0d7">协作</div>
<div class="t c" style="left:20px;top:75px;">直线</div>
<div class="t c" style="left:50.5px;top:75px;">多段线</div>
<div class="t c" style="left:80.5px;top:75px;">圆</div>
<div class="t c" style="left:113px;top:75px;">圆弧</div>
<div class="t c" style="left:267.5px;top:75px;">文字</div>
<div class="t c" style="left:299.5px;top:75px;">标注</div>
<div class="t c" style="left:367px;top:74px;">图层</div>
<div class="t c" style="left:413px;top:74px;">块</div>
<div class="t c" style="left:459px;top:74px;">特性</div>
<div class="t c" style="left:504.5px;top:74px;">组</div>
<div class="t c" style="left:550.5px;top:74px;">实用工具</div>
<div class="t c" style="left:596.5px;top:74px;">剪贴板</div>
<div class="t" style="left:67px;top:103px;">绘图</div>
<div class="t" style="left:190px;top:103px;">修改</div>
<div class="t" style="left:281px;top:103px;">注释</div>
<div class="t" style="left:47px;top:123px;color:#cdd0d7">开始</div>
<div class="t" style="left:83px;top:123px;font-weight:bold;font-size:10px;color:#fff">Drawing1</div>
<div class="t" style="left:47px;top:466px;color:#fff">模型</div>
<div class="t" style="left:83px;top:466px;">布局1</div>
<div class="t" style="left:125px;top:466px;">布局2</div>
<div class="t" style="left:242.5px;top:468px;font-size:9px">模型</div>
<div class="t" style="left:502px;top:468px;font-size:8.500px;letter-spacing:-.8px;font-weight:bold">1:1</div>
<div class="t" style="left:202.5px;top:444px;font-size:9.800px;font-style:italic;color:#5a6170">键入命令</div>
<div class="wm wm1" style="left:510.6px;top:86.3px">阳子湖软件园</div>
<div class="wm wm2" style="left:522.3px;top:105.5px">www.yangzihu.com</div>
<div class="wm wm1" style="left:282.6px;top:250.3px">阳子湖软件园</div>
<div class="wm wm2" style="left:294.3px;top:269.5px">www.yangzihu.com</div>
<div class="wm wm1" style="left:31.6px;top:414.3px">阳子湖软件园</div>
<div class="wm wm2" style="left:43.3px;top:433.5px">www.yangzihu.com</div>
</body></html>
